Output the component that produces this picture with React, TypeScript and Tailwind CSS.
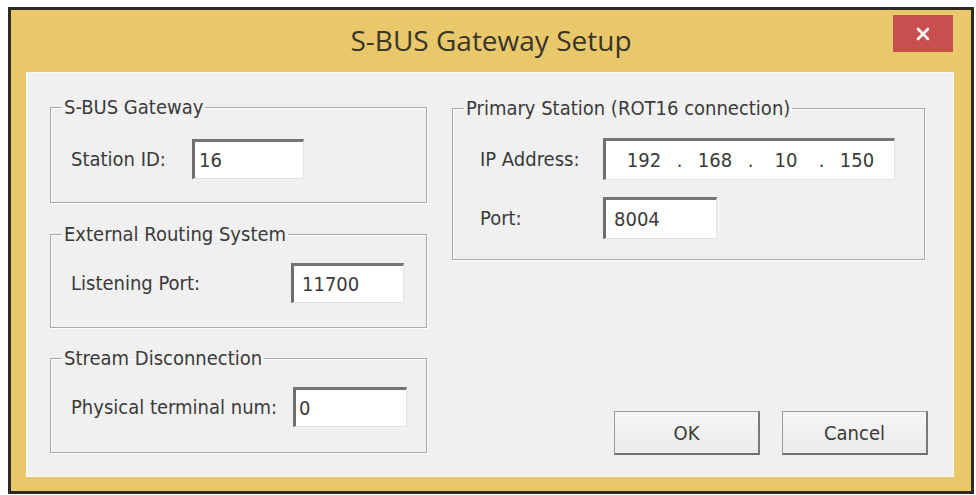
import React from "react";

const font = { fontFamily: '"DejaVu Sans Condensed", "DejaVu Sans", Tahoma, sans-serif' };

// sunken Win32 edit box
function Field({ value, className, pad = "pl-[8px]" }: { value: string; className: string; pad?: string }) {
  return (
    <div
      className={`flex items-center bg-white border-t-[3px] border-l-[3px] border-r border-b border-t-[#757575] border-l-[#6e6e6e] border-r-[#e2e2e2] border-b-[#e2e2e2] text-[20px] text-[#3a3a3a] ${pad} ${className}`}
    >
      {value}
    </div>
  );
}

function GroupBox({ title, className, children }: { title: string; className: string; children: React.ReactNode }) {
  return (
    <fieldset
      className={`border border-[#a9a9a9] shadow-[inset_1px_1px_0_#fff,1px_1px_0_#fff] ${className}`}
    >
      <legend className="ml-[11px] px-[2px] text-[20px] leading-[20px] text-[#3a3a3a]">{title}</legend>
      {children}
    </fieldset>
  );
}

function Button({ label }: { label: string }) {
  return (
    <button className="w-[146px] h-[44px] bg-gradient-to-b from-[#f6f6f6] to-[#ebebeb] border border-[#9a9a9a] border-b-2 border-r-2 border-b-[#6f6f6f] border-r-[#7a7a7a] text-[20px] text-[#3a3a3a]">
      {label}
    </button>
  );
}

function IpField() {
  const octets = ["192", "168", "10", "150"];
  return (
    <div className="flex items-center w-[292px] h-[42px] bg-white border-t-[3px] border-l-[3px] border-r border-b border-t-[#757575] border-l-[#6e6e6e] border-r-[#e2e2e2] border-b-[#e2e2e2] pl-[13px] text-[20px] text-[#3a3a3a]">
      {octets.map((o, i) => (
        <React.Fragment key={i}>
          <span className="w-[50px] text-center">{o}</span>
          {i < 3 && <span className="w-[21px] text-center">.</span>}
        </React.Fragment>
      ))}
    </div>
  );
}

export default function App() {
  return (
    <div className="w-[976px] h-[495px] bg-white pt-[7px] pl-[8px]" style={font}>
      <div className="w-[966px] h-[487px] border-[3px] border-[#2f2a22] bg-[#e8c86b] flex flex-col">
        {/* title bar */}
        <div className="h-[62px] grid grid-cols-[1fr_auto_1fr]">
          <div />
          <div
            className="self-center text-[28px] text-[#3a3526] pb-[2px]"
            style={{ fontFamily: '"Open Sans", "Noto Sans", sans-serif' }}
          >
            S-BUS Gateway Setup
          </div>
          <div className="flex justify-end items-start">
            <button className="mt-[5px] mr-[18px] w-[60px] h-[37px] bg-[#c84f4e] flex items-center justify-center">
              <svg width="14" height="14" viewBox="0 0 14 14">
                <path d="M2 2 L12 12 M12 2 L2 12" stroke="#fff" strokeWidth="2.6" strokeLinecap="round" />
              </svg>
            </button>
          </div>
        </div>

        {/* client area */}
        <div className="ml-[15px] w-[928px] h-[405px] bg-[#f0f0f0] border border-[#f8f8f8] flex pl-[23px] pt-[24px]">
          <div className="w-[377px] flex flex-col">
            <GroupBox title="S-BUS Gateway" className="h-[106px]">
              <div className="flex items-center mt-[22px] pl-[20px]">
                <span className="w-[121px] text-[20px] text-[#3a3a3a]">Station ID:</span>
                <Field value="16" className="w-[112px] h-[40px]" pad="pl-[4px]" />
              </div>
            </GroupBox>
            <GroupBox title="External Routing System" className="h-[104px] mt-[21px]">
              <div className="flex items-center mt-[19px] pl-[20px]">
                <span className="w-[220px] text-[20px] text-[#3a3a3a]">Listening Port:</span>
                <Field value="11700" className="w-[113px] h-[40px]" />
              </div>
            </GroupBox>
            <GroupBox title="Stream Disconnection" className="h-[105px] mt-[20px]">
              <div className="flex items-center mt-[19px] pl-[20px]">
                <span className="w-[222px] text-[20px] text-[#3a3a3a]">Physical terminal num:</span>
                <Field value="0" className="w-[114px] h-[40px]" pad="pl-[3px]" />
              </div>
            </GroupBox>
          </div>

          <div className="ml-[25px] w-[476px] flex flex-col pb-[21px]">
            <GroupBox title="Primary Station (ROT16 connection)" className="w-[473px] h-[162px] mt-[1px]">
              <div className="flex items-center mt-[20px] pl-[27px]">
                <span className="w-[123px] text-[20px] text-[#3a3a3a]">IP Address:</span>
                <IpField />
              </div>
              <div className="flex items-center mt-[17px] pl-[27px]">
                <span className="w-[123px] text-[20px] text-[#3a3a3a]">Port:</span>
                <Field value="8004" className="w-[114px] h-[42px]" />
              </div>
            </GroupBox>
            <div className="mt-auto flex justify-end gap-[22px]">
              <Button label="OK" />
              <Button label="Cancel" />
            </div>
          </div>
        </div>
      </div>
    </div>
  );
}
